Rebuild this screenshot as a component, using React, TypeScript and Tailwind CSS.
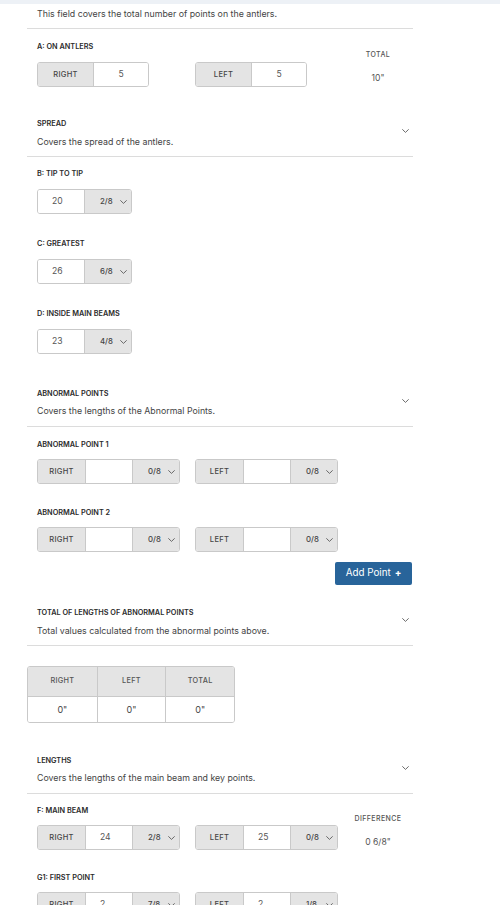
import React from 'react';

const Chevron: React.FC<{ className?: string }> = ({ className }) => (
  <svg width="7" height="4" viewBox="0 0 7 4" className={className}>
    <path d="M0.6 0.6 L3.5 3.4 L6.4 0.6" stroke="#5a5a5a" strokeWidth="0.9" fill="none" strokeLinecap="round" />
  </svg>
);

const SectionHeader: React.FC<{ title: string; desc: string; gap: string; className?: string }> = ({
  title,
  desc,
  gap,
  className,
}) => (
  <div className={`flex items-start justify-between border-b border-[#dcdcdc] pl-[10px] pr-[4px] ${className ?? ''}`}>
    <div>
      <div className="text-[7.3px] font-semibold leading-[10px] text-[#2b2b2b]">{title}</div>
      <div className={`${gap} text-[8.8px] leading-[12px] text-[#444]`}>{desc}</div>
    </div>
    <Chevron className="mt-[10px]" />
  </div>
);

const FieldLabel: React.FC<{ children: React.ReactNode; className?: string }> = ({ children, className }) => (
  <div className={`text-[7.3px] font-semibold leading-[10px] text-[#2b2b2b] ${className ?? ''}`}>{children}</div>
);

const Select: React.FC<{ value: string }> = ({ value }) => (
  <div className="flex flex-1 items-center justify-between border-l border-[#c9c9c9] bg-[#e4e4e4] pl-[15px] pr-[4px]">
    <span className="text-[7.8px] font-medium text-[#444]">{value}</span>
    <Chevron />
  </div>
);

const PairGroup: React.FC<{ label: string; value: string }> = ({ label, value }) => (
  <div className="flex h-[25px] w-[112px] overflow-hidden rounded-[3px] border border-[#c9c9c9]">
    <div className="flex w-[55px] items-center justify-center bg-[#e4e4e4] text-[7.5px] font-medium tracking-[0.04em] text-[#444]">
      {label}
    </div>
    <div className="flex flex-1 items-center justify-center border-l border-[#c9c9c9] bg-white text-[8.6px] text-[#555]">
      {value}
    </div>
  </div>
);

const MeasureGroup: React.FC<{ value: string; frac: string }> = ({ value, frac }) => (
  <div className="flex h-[25px] w-[95px] overflow-hidden rounded-[3px] border border-[#c9c9c9]">
    <div className="flex w-[46px] items-center bg-white pl-[14px] text-[8.6px] text-[#555]">{value}</div>
    <Select value={frac} />
  </div>
);

const SideGroup: React.FC<{ label: string; value: string; frac: string }> = ({ label, value, frac }) => (
  <div className="flex h-[25px] w-[143px] overflow-hidden rounded-[3px] border border-[#c9c9c9]">
    <div className="flex w-[47px] items-center justify-center bg-[#e4e4e4] text-[7.5px] font-medium tracking-[0.04em] text-[#444]">
      {label}
    </div>
    <div className="flex w-[47px] items-center border-l border-[#c9c9c9] bg-white pl-[14px] text-[8.6px] text-[#555]">
      {value}
    </div>
    <Select value={frac} />
  </div>
);

const SideColumn: React.FC<{ title: string; value: string }> = ({ title, value }) => (
  <div className="w-[50px] pt-[8px] text-center">
    <div className="text-[7px] font-medium leading-[10px] tracking-[0.06em] text-[#555]">{title}</div>
    <div className="mt-[12px] text-[8.6px] leading-[12px] text-[#555]">{value}</div>
  </div>
);

const SideField: React.FC<{
  label: string;
  right: [string, string];
  left: [string, string];
  column?: [string, string];
  className?: string;
}> = ({ label, right, left, column, className }) => (
  <div className={`flex px-[10px] ${className ?? ''}`}>
    <div className="w-[316px]">
      <FieldLabel className="mb-[9px]">{label}</FieldLabel>
      <div className="flex">
        <div className="w-[158px]">
          <SideGroup label="RIGHT" value={right[0]} frac={right[1]} />
        </div>
        <div className="w-[158px]">
          <SideGroup label="LEFT" value={left[0]} frac={left[1]} />
        </div>
      </div>
    </div>
    {column && <SideColumn title={column[0]} value={column[1]} />}
  </div>
);

const App: React.FC = () => {
  return (
    <div className="h-[905px] overflow-hidden bg-white font-['Inter',sans-serif]">
      <div className="h-[4px] bg-[#edf1f6]" />
      <div className="ml-[27px] w-[386px]">
        <div className="border-b border-[#dcdcdc] px-[10px] pt-[4px] pb-[8px] text-[8.8px] leading-[12px] text-[#444]">
          This field covers the total number of points on the antlers.
        </div>

        {/* A */}
        <div className="mt-[13px] flex px-[10px]">
          <div className="w-[316px]">
            <FieldLabel className="mb-[10px]">A: ON ANTLERS</FieldLabel>
            <div className="flex">
              <div className="w-[158px]">
                <PairGroup label="RIGHT" value="5" />
              </div>
              <div className="w-[158px]">
                <PairGroup label="LEFT" value="5" />
              </div>
            </div>
          </div>
          <SideColumn title="TOTAL" value={'10"'} />
        </div>

        <SectionHeader className="mt-[32px] pb-[8px]" gap="mt-[7px]" title="SPREAD" desc="Covers the spread of the antlers." />

        <div className="mt-[12px] px-[10px]">
          <FieldLabel className="mb-[10px]">B: TIP TO TIP</FieldLabel>
          <MeasureGroup value="20" frac="2/8" />
        </div>
        <div className="mt-[25px] px-[10px]">
          <FieldLabel className="mb-[10px]">C: GREATEST</FieldLabel>
          <MeasureGroup value="26" frac="6/8" />
        </div>
        <div className="mt-[25px] px-[10px]">
          <FieldLabel className="mb-[10px]">D: INSIDE MAIN BEAMS</FieldLabel>
          <MeasureGroup value="23" frac="4/8" />
        </div>

        <SectionHeader
          className="mt-[35px] pb-[9px]"
          gap="mt-[6px]"
          title="ABNORMAL POINTS"
          desc="Covers the lengths of the Abnormal Points."
        />

        <SideField className="mt-[13px]" label="ABNORMAL POINT 1" right={['', '0/8']} left={['', '0/8']} />
        <SideField className="mt-[24px]" label="ABNORMAL POINT 2" right={['', '0/8']} left={['', '0/8']} />

        <div className="mt-[10px] flex justify-end pr-[1px]">
          <button className="flex h-[23px] w-[77px] items-center justify-center gap-[4px] rounded-[2px] bg-[#28649a] text-[9.8px] text-white">
            Add Point <span className="font-bold">+</span>
          </button>
        </div>

        <SectionHeader
          className="mt-[23px] pb-[8px]"
          gap="mt-[7px]"
          title="TOTAL OF LENGTHS OF ABNORMAL POINTS"
          desc="Total values calculated from the abnormal points above."
        />

        <div className="mt-[20px] w-[208px] overflow-hidden rounded-[3px] border border-[#c9c9c9]">
          <div className="grid h-[29px] grid-cols-3 bg-[#e4e4e4] text-[7.3px] font-medium tracking-[0.04em] text-[#555]">
            <div className="flex items-center justify-center">RIGHT</div>
            <div className="flex items-center justify-center border-l border-[#c9c9c9]">LEFT</div>
            <div className="flex items-center justify-center border-l border-[#c9c9c9]">TOTAL</div>
          </div>
          <div className="grid h-[26px] grid-cols-3 border-t border-[#c9c9c9] bg-white text-[9px] text-[#444]">
            <div className="flex items-center justify-center">0"</div>
            <div className="flex items-center justify-center border-l border-[#c9c9c9]">0"</div>
            <div className="flex items-center justify-center border-l border-[#c9c9c9]">0"</div>
          </div>
        </div>

        <SectionHeader
          className="mt-[33px] pb-[9px]"
          gap="mt-[6px]"
          title="LENGTHS"
          desc="Covers the lengths of the main beam and key points."
        />

        <SideField
          className="mt-[12px]"
          label="F: MAIN BEAM"
          right={['24', '2/8']}
          left={['25', '0/8']}
          column={['DIFFERENCE', '0 6/8"']}
        />
        <SideField className="mt-[23px]" label="G1: FIRST POINT" right={['2', '7/8']} left={['2', '1/8']} />
      </div>
    </div>
  );
};

export default App;
